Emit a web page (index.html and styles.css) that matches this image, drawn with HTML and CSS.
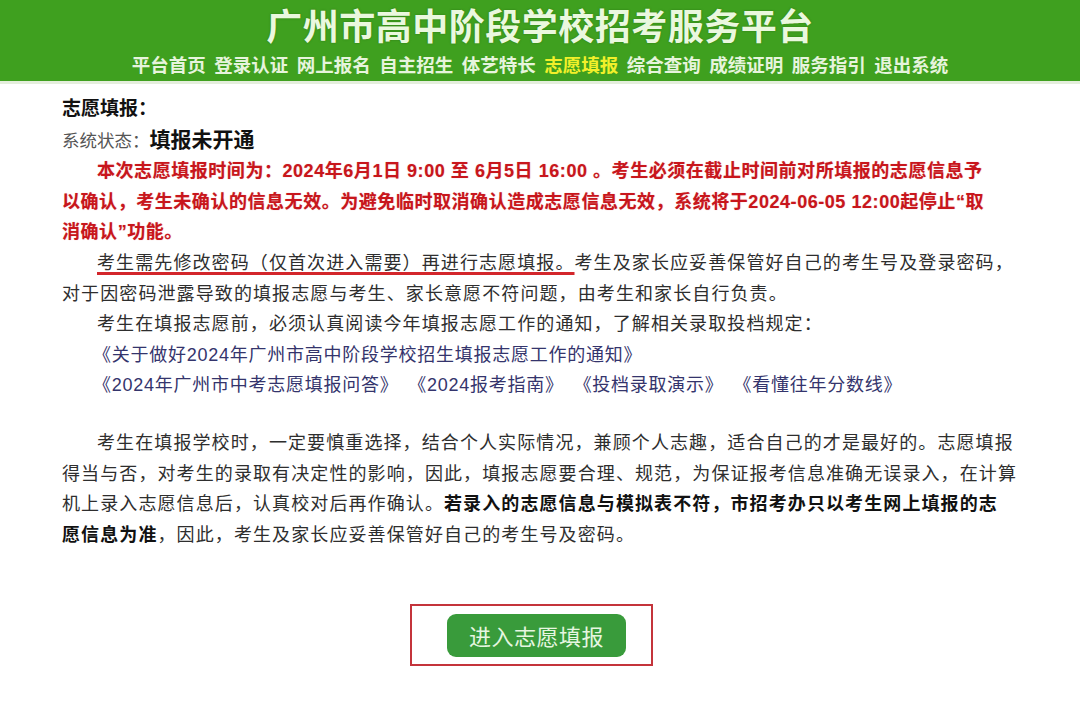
FILE: index.html
```html
<!DOCTYPE html>
<html lang="zh-CN">
<head>
<meta charset="utf-8">
<title>广州市高中阶段学校招考服务平台</title>
<link rel="stylesheet" href="styles.css">
</head>
<body>
<header class="header">
  <h1 class="title">广州市高中阶段学校招考服务平台</h1>
  <nav class="nav">
    <a>平台首页</a><a>登录认证</a><a>网上报名</a><a>自主招生</a><a>体艺特长</a><a class="active">志愿填报</a><a>综合查询</a><a>成绩证明</a><a>服务指引</a><a>退出系统</a>
  </nav>
</header>
<main class="content">
  <div class="heading">志愿填报：</div>
  <div class="status"><span class="status-label">系统状态：</span><span class="status-value">填报未开通</span></div>
  <p class="notice indent">本次志愿填报时间为：2024年6月1日 9:00 至 6月5日 16:00 。考生必须在截止时间前对所填报的志愿信息予<br>以确认，考生未确认的信息无效。为避免临时取消确认造成志愿信息无效，系统将于2024-06-05 12:00起停止“取<br>消确认”功能。</p>
  <p class="text indent"><span class="mark">考生需先修改密码（仅首次进入需要）再进行志愿填报。</span>考生及家长应妥善保管好自己的考生号及登录密码，<br>对于因密码泄露导致的填报志愿与考生、家长意愿不符问题，由考生和家长自行负责。</p>
  <p class="text indent">考生在填报志愿前，必须认真阅读今年填报志愿工作的通知，了解相关录取投档规定：</p>
  <p class="links"><a>《关于做好2024年广州市高中阶段学校招生填报志愿工作的通知》</a></p>
  <p class="links"><a>《2024年广州市中考志愿填报问答》</a> <a>《2024报考指南》</a> <a>《投档录取演示》</a> <a>《看懂往年分数线》</a></p>
  <p class="text indent gap">考生在填报学校时，一定要慎重选择，结合个人实际情况，兼顾个人志趣，适合自己的才是最好的。志愿填报<br>得当与否，对考生的录取有决定性的影响，因此，填报志愿要合理、规范，为保证报考信息准确无误录入，在计算<br>机上录入志愿信息后，认真校对后再作确认。<b>若录入的志愿信息与模拟表不符，市招考办只以考生网上填报的志<br>愿信息为准</b>，因此，考生及家长应妥善保管好自己的考生号及密码。</p>
  <div class="action">
    <div class="action-box"><button class="enter-btn">进入志愿填报</button></div>
  </div>
</main>
</body>
</html>
```
FILE: styles.css
```css
html, body {
  margin: 0;
  padding: 0;
  background: #ffffff;
}
body {
  font-family: "Liberation Sans", "Noto Sans CJK SC", sans-serif;
  color: #2b2b2b;
}
.header {
  background: #3fa01f;
  height: 81px;
  box-sizing: border-box;
  padding-top: 8px;
  display: flex;
  flex-direction: column;
  align-items: center;
  box-shadow: 0 3px 0 #e4eedc;
}
.title {
  margin: 0;
  font-size: 36px;
  line-height: 40px;
  font-weight: 700;
  color: #eaf8de;
  letter-spacing: 0.5px;
  text-shadow: 0 0 2px rgba(30, 90, 10, 0.6);
}
.nav {
  margin-top: 8px;
  display: flex;
  gap: 8.5px;
  font-size: 18.5px;
  line-height: 20px;
  font-weight: 700;
}
.nav a {
  color: #e6f4dc;
}
.nav a.active {
  color: #f2f02a;
}
.content {
  padding: 13px 0 0 62px;
  font-size: 18px;
  line-height: 30.6px;
}
.heading {
  font-size: 19px;
  font-weight: 700;
  color: #111;
}
.status-label {
  font-size: 17.5px;
  color: #555;
}
.status-value {
  font-size: 21px;
  font-weight: 700;
  color: #111;
}
p {
  margin: 0;
  white-space: nowrap;
}
.indent {
  text-indent: 35px;
}
.notice {
  color: #c8161c;
  font-weight: 700;
  letter-spacing: 0.55px;
  text-shadow: 0 0 1px rgba(200, 22, 28, 0.4);
}
.text {
  color: #2e2e2e;
  letter-spacing: 1.1px;
}
.text b {
  color: #111;
}
.mark {
  text-decoration: underline;
  text-decoration-color: #d3262b;
  text-decoration-thickness: 3px;
  text-underline-offset: 3px;
}
.links {
  padding-left: 31px;
  color: #34346c;
  letter-spacing: 0.75px;
}
.links a {
  margin-right: 4px;
}
.gap {
  margin-top: 27px;
}
.action {
  margin-top: 54px;
  padding-left: 348px;
  display: flex;
}
.action-box {
  width: 243px;
  height: 62px;
  box-sizing: border-box;
  border: 2px solid #c4343b;
  display: flex;
  justify-content: center;
  align-items: center;
  padding-left: 10px;
}
.enter-btn {
  width: 179px;
  height: 43px;
  border: none;
  border-radius: 9px;
  background: #399b3b;
  color: #e6f6e0;
  font-family: "Liberation Sans", "Noto Sans CJK SC", sans-serif;
  font-size: 22px;
  letter-spacing: 0.5px;
  padding: 0;
}
```
